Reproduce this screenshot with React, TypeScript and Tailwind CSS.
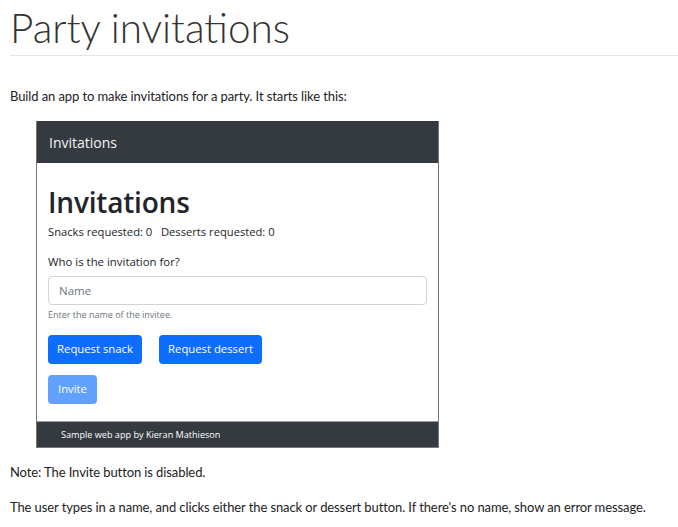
export default function App() {
  return (
    <div className="min-h-[527px] w-[678px] bg-white px-[10px] font-['Lato',sans-serif] text-[#222]">
      <h1 className="pt-[2px] text-[40.5px] font-light leading-[52px] text-[#333]">Party invitations</h1>
      <hr className="mt-[1px] mr-[-10px] border-[#e5e5e5]" />
      <p className="mt-[30px] text-[13px] leading-[20px] tracking-[-0.1px]">
        Build an app to make invitations for a party. It starts like this:
      </p>

      <div className="mt-[15px] ml-[26px] w-[403px] border-x border-b border-[#777] font-['Open_Sans',sans-serif]">
        <div className="flex h-[42px] items-center bg-[#343a40] px-[12px] text-[14px] text-[#f3f3f3]">
          Invitations
        </div>
        <div className="px-[11px] pt-[21px] pb-[17px]">
          <h2 className="text-[28px] font-semibold leading-[36px] tracking-[-0.2px] text-[#212529]">Invitations</h2>
          <div className="mt-[3px] text-[11.2px] leading-[18px] text-[#212529]">
            Snacks requested: 0&nbsp;&nbsp;&nbsp;Desserts requested: 0
          </div>
          <div className="mt-[12px] text-[11.4px] leading-[18px] text-[#212529]">Who is the invitation for?</div>
          <input
            className="mt-[5px] h-[29px] w-[379px] rounded-[4px] border border-[#ced4da] px-[10px] text-[11.5px] placeholder:text-[#6c757d]"
            placeholder="Name"
          />
          <div className="mt-[3px] text-[9px] leading-[14px] text-[#6c757d]">Enter the name of the invitee.</div>
          <div className="mt-[13px] flex gap-[17px]">
            <button className="h-[29px] w-[94px] rounded-[4px] bg-[#0d6efd] text-[11.3px] text-white">
              Request snack
            </button>
            <button className="h-[29px] w-[103px] rounded-[4px] bg-[#0d6efd] text-[11.3px] text-white">
              Request dessert
            </button>
          </div>
          <button
            disabled
            className="mt-[11px] h-[29px] w-[49px] rounded-[4px] bg-[#0d6efd] text-[11.3px] text-white opacity-65"
          >
            Invite
          </button>
        </div>
        <div className="flex h-[26px] items-center border-t border-[#999] bg-[#343a40] pl-[24px] text-[9.1px] text-white">
          Sample web app by Kieran Mathieson
        </div>
      </div>

      <p className="mt-[14px] text-[13px] leading-[20px] tracking-[-0.1px]">Note: The Invite button is disabled.</p>
      <p className="mt-[15px] text-[13px] leading-[20px] tracking-[-0.1px]">
        The user types in a name, and clicks either the snack or dessert button. If there's no name, show an error
        message.
      </p>
    </div>
  );
}
